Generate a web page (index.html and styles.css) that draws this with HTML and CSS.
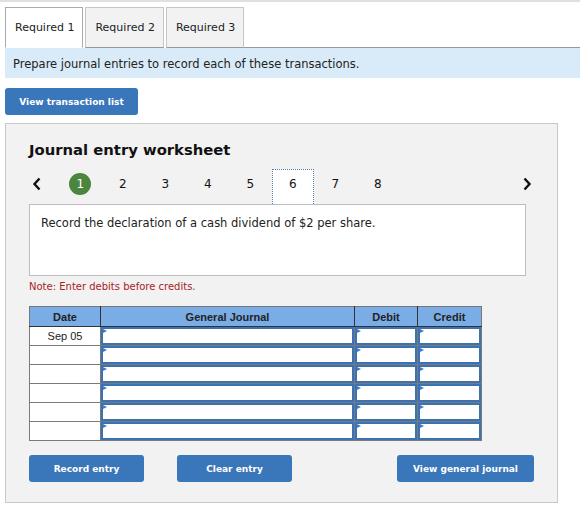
FILE: index.html
```html
<!DOCTYPE html>
<html>
<head>
<meta charset="utf-8">
<link rel="stylesheet" href="styles.css">
</head>
<body>
<div class="topbar"></div>
<div class="tabs">
  <div class="tab active">Required 1</div>
  <div class="tab">Required 2</div>
  <div class="tab">Required 3</div>
  <div class="tabfill"></div>
</div>
<div class="instr">Prepare journal entries to record each of these transactions.</div>
<button class="btn btn-list">View transaction list</button>
<div class="panel">
  <h2 class="title">Journal entry worksheet</h2>
  <div class="nav">
    <div class="arrow prev"><svg width="10" height="14" viewBox="0 0 10 14"><polyline points="7.5,1.5 2.5,7 7.5,12.5" fill="none" stroke="#111" stroke-width="2.4"/></svg></div>
    <div class="step"><span class="done">1</span></div>
    <div class="step">2</div>
    <div class="step">3</div>
    <div class="step">4</div>
    <div class="step">5</div>
    <div class="step current">6</div>
    <div class="step">7</div>
    <div class="step">8</div>
    <div class="arrow next"><svg width="10" height="14" viewBox="0 0 10 14"><polyline points="2.5,1.5 7.5,7 2.5,12.5" fill="none" stroke="#111" stroke-width="2.4"/></svg></div>
  </div>
  <div class="desc">Record the declaration of a cash dividend of $2 per share.</div>
  <div class="note">Note: Enter debits before credits.</div>
  <table class="journal">
    <thead>
      <tr><th class="c-date">Date</th><th class="c-gj">General Journal</th><th class="c-dr">Debit</th><th class="c-cr">Credit</th></tr>
    </thead>
    <tbody>
      <tr><td class="date">Sep 05</td><td><div class="inp"></div></td><td><div class="inp"></div></td><td><div class="inp"></div></td></tr>
      <tr><td class="date"></td><td><div class="inp"></div></td><td><div class="inp"></div></td><td><div class="inp"></div></td></tr>
      <tr><td class="date"></td><td><div class="inp"></div></td><td><div class="inp"></div></td><td><div class="inp"></div></td></tr>
      <tr><td class="date"></td><td><div class="inp"></div></td><td><div class="inp"></div></td><td><div class="inp"></div></td></tr>
      <tr><td class="date"></td><td><div class="inp"></div></td><td><div class="inp"></div></td><td><div class="inp"></div></td></tr>
      <tr><td class="date"></td><td><div class="inp"></div></td><td><div class="inp"></div></td><td><div class="inp"></div></td></tr>
    </tbody>
  </table>
  <div class="actions">
    <button class="btn btn-act">Record entry</button>
    <button class="btn btn-act">Clear entry</button>
    <button class="btn btn-view">View general journal</button>
  </div>
</div>
</body>
</html>
```
FILE: styles.css
```css
html, body {
  margin: 0;
  padding: 0;
  background: #fff;
}
body {
  font-family: "DejaVu Sans", Verdana, sans-serif;
  color: #222;
  width: 580px;
}
.topbar {
  height: 2px;
  background: #e0e0e0;
}
.tabs {
  display: flex;
  margin-top: 5px;
  padding-left: 5px;
  height: 41px;
}
.tab {
  box-sizing: border-box;
  height: 41px;
  padding: 0 8px 0 9px;
  line-height: 40px;
  font-size: 11px;
  color: #222;
  background: #f2f2f2;
  border: 1px solid #c6c6c6;
  border-bottom: 1px solid #999;
  margin-right: 2px;
}
.tab.active {
  background: #fff;
  border-color: #aaa;
  border-bottom-color: #fff;
}
.tabfill {
  flex: 1;
  border-bottom: 1px solid #999;
  margin-left: -2px;
}
.instr {
  box-sizing: border-box;
  margin-left: 5px;
  height: 30px;
  line-height: 30px;
  padding: 1px 0 0 8px;
  background: #d9ebf8;
  font-size: 11.5px;
  color: #222;
}
.btn {
  border: none;
  border-radius: 3px;
  background: #3a76ba;
  color: #fff;
  font-family: "DejaVu Sans", Verdana, sans-serif;
  font-weight: bold;
  font-size: 9px;
  height: 27px;
  padding: 0;
  cursor: pointer;
}
.btn-list {
  display: block;
  margin: 10px 0 0 5px;
  width: 133px;
}
.panel {
  box-sizing: border-box;
  margin: 8px 0 0 5px;
  width: 553px;
  height: 380px;
  background: #f2f2f2;
  border: 1px solid #c8c8c8;
  padding: 0 0 0 23px;
}
.title {
  margin: 16px 0 0 0;
  font-size: 14.8px;
  line-height: 20px;
  font-weight: bold;
  color: #111;
  height: 20px;
}
.nav {
  display: flex;
  align-items: center;
  margin-top: 9px;
  height: 35px;
  width: 503px;
}
.arrow {
  display: flex;
  align-items: center;
  height: 35px;
  padding-bottom: 6px;
  box-sizing: border-box;
}
.prev {
  width: 30px;
  padding-left: 3px;
}
.next {
  margin-left: auto;
}
.step {
  box-sizing: border-box;
  width: 42.5px;
  height: 35px;
  padding-bottom: 6px;
  display: flex;
  align-items: center;
  justify-content: center;
  font-size: 12px;
  color: #111;
}
.step.current {
  background: #fff;
  border: 1px dotted #5a7fb0;
  border-bottom: none;
}
.done {
  width: 22px;
  height: 22px;
  border-radius: 50%;
  background: #4b853e;
  color: #fff;
  display: flex;
  align-items: center;
  justify-content: center;
  font-size: 12px;
}
.desc {
  box-sizing: border-box;
  width: 497px;
  height: 72px;
  background: #fff;
  border: 1px solid #bdbdbd;
  padding: 10px 11px;
  font-size: 11.5px;
  line-height: 16px;
  color: #222;
}
.note {
  margin-top: 5px;
  font-size: 10px;
  line-height: 12px;
  color: #a8221f;
}
.journal {
  margin-top: 13px;
  border-collapse: collapse;
  table-layout: fixed;
  width: 453px;
  font-family: "Liberation Sans", Arial, sans-serif;
  font-size: 11px;
}
.journal th {
  background: #7aade5;
  height: 19px;
  padding: 0;
  font-weight: bold;
  color: #222;
  border: 1px solid #333;
  border-top-color: #777;
}
.journal th:first-child { border-left-color: #777; }
.journal th:last-child { border-right-color: #777; }
.c-date { width: 70px; }
.c-gj { width: 253px; }
.c-dr { width: 62px; }
.c-cr { width: 63px; }
.journal td {
  padding: 0;
  border: 1px solid #7a7a7a;
  background: #fff;
  height: 18px;
}
.journal td.date {
  text-align: center;
  color: #222;
}
.inp {
  position: relative;
  box-sizing: border-box;
  height: 18px;
  border: 2px solid #3b72b4;
  background: #fff;
}
.inp::before {
  content: "";
  position: absolute;
  left: 0;
  top: 0;
  border-left: 4px solid #3a7bd0;
  border-top: 2.5px solid transparent;
  border-bottom: 2.5px solid transparent;
}
.actions {
  display: flex;
  margin-top: 14px;
  width: 505px;
}
.btn-act {
  width: 115px;
  margin-right: 33px;
}
.btn-view {
  width: 137px;
  margin-left: auto;
}
```
